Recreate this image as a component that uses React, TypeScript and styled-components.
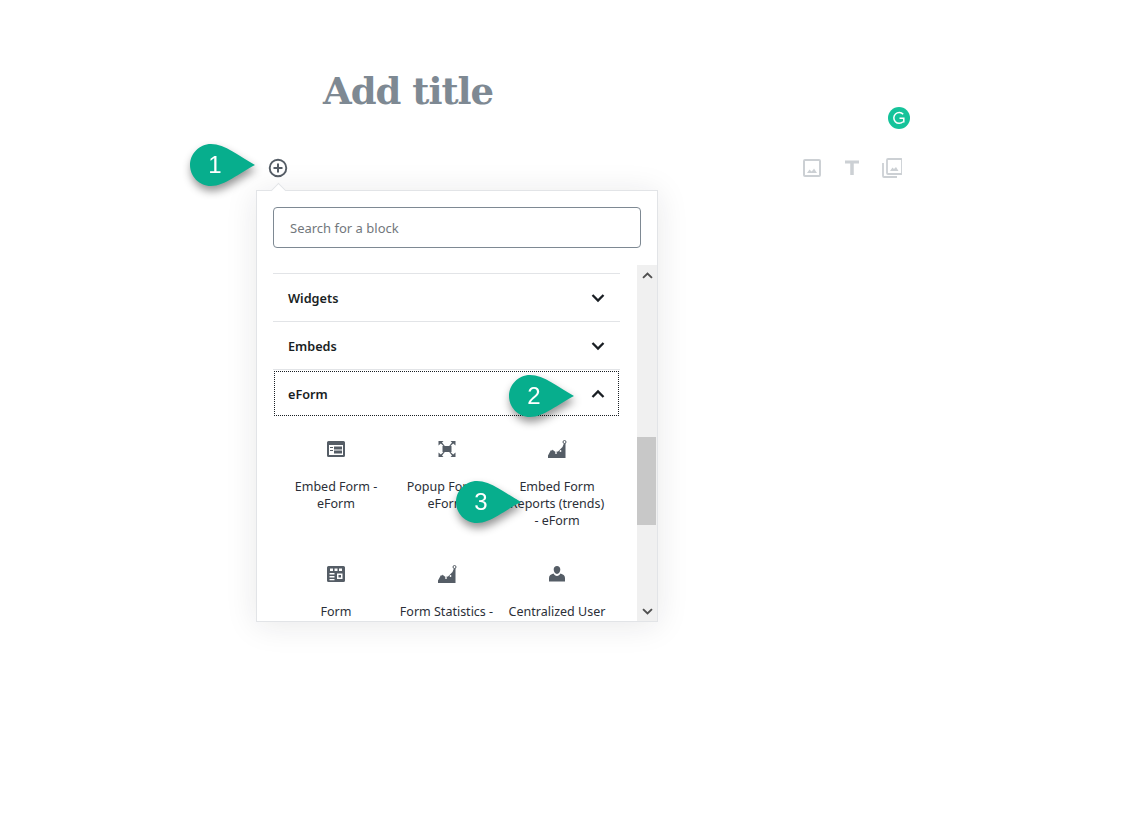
import styled, { createGlobalStyle } from "styled-components";

const GlobalStyle = createGlobalStyle`
  html, body {
    margin: 0;
    padding: 0;
    background: #fff;
    overflow: hidden;
  }
  body {
    font-family: "Noto Sans", "Open Sans", sans-serif;
    color: #191e23;
  }
`;

type Block = { title: string; icon: keyof typeof blockIcons };

const blockIcons = {
  embed: (
    <path
      fillRule="evenodd"
      d="M1 3.500A1.500 1.500 0 0 1 2.500 2h15A1.500 1.500 0 0 1 19 3.500v13a1.500 1.500 0 0 1-1.500 1.500h-15A1.500 1.500 0 0 1 1 16.500zM3 6v10h14V6zm5 1.500h8v3H8zm0 4h8v3H8zM4 8h3v1H4zm0 3h3v1H4z"
    />
  ),
  popup: (
    <>
      <path d="M1.500 2h5L5 3.500l2.800 3.500H6.500L3.800 4.500 1.500 6.500zM18.500 2h-5L15 3.500 12.200 7h1.300l2.700-2.500 2.300 2zM1.500 18h5L5 16.500 7.800 13H6.500l-2.700 2.500-2.300-2zM18.500 18h-5l1.500-1.500-2.800-3.500h1.300l2.700 2.500 2.300-2z" />
      <path d="M5.500 7h9v6h-9z" />
    </>
  ),
  chart: (
    <>
      <path d="M1 19v-2.500l3.500-6.500 4 3 2.500-.5 2.500-2.500 2-2L17.500 3l1 .5V19z" />
      <circle cx="4.500" cy="10.500" r="1.100" fill="#fff" />
      <circle cx="9" cy="14" r="0.900" fill="#fff" />
      <circle cx="13.500" cy="12" r="0.900" fill="#fff" />
      <circle cx="17.500" cy="3" r="1.500" fill="#fff" stroke="#555d66" strokeWidth="1" />
    </>
  ),
  form: (
    <path
      fillRule="evenodd"
      d="M2.500 2h15A1.500 1.500 0 0 1 19 3.500v13a1.500 1.500 0 0 1-1.500 1.500h-15A1.500 1.500 0 0 1 1 16.500v-13A1.500 1.500 0 0 1 2.500 2zM4 4.500V7h3V4.500zm4.500 0V7h3V4.500zm4.500 0V7h3V4.500zM3.500 9v1.500h5V9zm0 3v1.500h5V12zm0 3v1.200h5V15zM11 9.500V15h5.500V9.500zm1.500 1.500H15v2.500h-2.500z"
    />
  ),
  user: (
    <path d="M10 2c2 0 3.300 1.500 3.300 3.500S12 10 10 10 6.700 7.500 6.700 5.500 8 2 10 2zM6.500 9.500C7.300 11 8.600 12 10 12s2.700-1 3.500-2.500C16 10.300 18 11.500 18 14v3.500H2V14c0-2.500 2-3.700 4.500-4.500z" />
  ),
};

const blocks: Block[] = [
  { title: "Embed Form - eForm", icon: "embed" },
  { title: "Popup Form - eForm", icon: "popup" },
  { title: "Embed Form Reports (trends) - eForm", icon: "chart" },
  { title: "Form", icon: "form" },
  { title: "Form Statistics - eForm", icon: "chart" },
  { title: "Centralized User", icon: "user" },
];

function Chevron({ up, size = 16 }: { up?: boolean; size?: number }) {
  return (
    <svg width={size} height={size} viewBox="0 0 16 16" fill="none" stroke="currentColor" strokeWidth="2.300">
      <path d={up ? "M2.500 11l5.500-5.500 5.500 5.500" : "M2.500 5l5.500 5.500 5.500-5.500"} />
    </svg>
  );
}

function Callout({ n, className }: { n: number; className?: string }) {
  return (
    <CalloutBox className={className}>
      <svg width="66" height="44" viewBox="0 0 66 44">
        <path d="M21 1C35 1 49 13 65 22 49 30 35 43 21 43 9 43 0 33 0 22S9 1 21 1z" fill="#07ae8d" />
      </svg>
      <CalloutNumber>{n}</CalloutNumber>
    </CalloutBox>
  );
}

export default function App() {
  return (
    <Page>
      <GlobalStyle />
      <Title>Add title</Title>
      <Grammarly>
        <svg width="22" height="22" viewBox="0 0 22 22" fill="none" stroke="#fff">
          <circle cx="11" cy="11" r="11" fill="#15c39a" stroke="none" />
          <path d="M15.200 7.300A5.400 5.400 0 1 0 15 14.800" strokeWidth="1.500" />
          <path d="M11.500 11.200h4.300v4.300" strokeWidth="1.500" />
        </svg>
      </Grammarly>

      <Toolbar>
        <PlusButton>
          <svg width="20" height="20" viewBox="0 0 20 20" fill="none" stroke="#555d66">
            <circle cx="10" cy="10" r="8.300" strokeWidth="1.900" />
            <path d="M10 5.500v9M5.500 10h9" strokeWidth="2" />
          </svg>
        </PlusButton>
        <QuickIcons>
          <svg width="20" height="20" viewBox="0 0 20 20" fill="none" stroke="#ccd0d4" strokeWidth="2">
            <rect x="2" y="2" width="16" height="16" rx="1" />
            <path d="M5 15l2.500-3.500 2 2 1.500-1.500 1-1.500 3 4.500z" fill="#ccd0d4" stroke="none" />
          </svg>
          <svg width="20" height="20" viewBox="0 0 20 20" fill="#ccd0d4">
            <path d="M3 2.500h14v3h-5.250V17h-3.500V5.500H3z" />
          </svg>
          <svg width="20" height="20" viewBox="0 0 20 20" fill="none" stroke="#ccd0d4" strokeWidth="1.800">
            <rect x="5" y="1" width="15" height="15" rx="1" />
            <path d="M1 5v13a1 1 0 0 0 1 1h13" />
            <path d="M8 13l2.500-3.500 1.500 1.500 1-1 1-1 2.500 4z" fill="#ccd0d4" stroke="none" />
          </svg>
        </QuickIcons>
      </Toolbar>

      <Panel>
        <PanelArrow />
        <SearchWrap>
          <SearchInput placeholder="Search for a block" readOnly />
        </SearchWrap>
        <ListArea>
          <List>
            <SectionRow>
              <span>Widgets</span>
              <Chevron />
            </SectionRow>
            <SectionRow>
              <span>Embeds</span>
              <Chevron />
            </SectionRow>
            <ActiveSection>
              <ActiveRow>
                <span>eForm</span>
                <Chevron up />
              </ActiveRow>
            </ActiveSection>
            <BlockGrid>
              {blocks.map((b) => (
                <BlockItem key={b.title}>
                  <svg width="20" height="20" viewBox="0 0 20 20" fill="#555d66">
                    {blockIcons[b.icon]}
                  </svg>
                  <BlockLabel>{b.title}</BlockLabel>
                </BlockItem>
              ))}
            </BlockGrid>
          </List>
          <Scrollbar>
            <ScrollArrow>
              <Chevron up size={13} />
            </ScrollArrow>
            <ScrollThumb />
            <ScrollArrow>
              <Chevron size={13} />
            </ScrollArrow>
          </Scrollbar>
        </ListArea>
      </Panel>

      <CalloutOne n={1} />
      <CalloutTwo n={2} />
      <CalloutThree n={3} />
    </Page>
  );
}

const Page = styled.div`
  position: relative;
  width: 1124px;
  height: 816px;
  overflow: hidden;
  padding-top: 62px;
  box-sizing: border-box;
`;

const Title = styled.h1`
  margin: 0 0 0 323px;
  font-family: "DejaVu Serif", "Liberation Serif", serif;
  font-size: 37px;
  line-height: 58px;
  font-weight: 700;
  letter-spacing: -1px;
  color: #7e8993;
`;

const Grammarly = styled.div`
  position: absolute;
  left: 888px;
  top: 107px;
  width: 22px;
  height: 22px;
`;

const Toolbar = styled.div`
  display: flex;
  justify-content: space-between;
  align-items: center;
  width: 636px;
  height: 20px;
  margin: 38px 0 0 268px;
`;

const PlusButton = styled.div`
  display: flex;
  width: 20px;
  height: 20px;
`;

const QuickIcons = styled.div`
  display: flex;
  gap: 20px;
  margin-right: 2px;
`;

const Panel = styled.div`
  position: relative;
  width: 402px;
  height: 432px;
  margin: 12px 0 0 256px;
  box-sizing: border-box;
  border: 1px solid #e2e4e7;
  background: #fff;
  box-shadow: 0 3px 30px rgba(25, 30, 35, 0.1);
`;

const PanelArrow = styled.div`
  position: absolute;
  left: 16px;
  top: -6px;
  width: 10px;
  height: 10px;
  background: #fff;
  border-top: 1px solid #e2e4e7;
  border-left: 1px solid #e2e4e7;
  transform: rotate(45deg);
`;

const SearchWrap = styled.div`
  padding: 16px 16px 17px;
`;

const SearchInput = styled.input`
  display: block;
  width: 100%;
  height: 41px;
  box-sizing: border-box;
  padding: 0 16px;
  border: 1px solid #7e8993;
  border-radius: 4px;
  outline: none;
  font-family: inherit;
  font-size: 13px;
  color: #32373c;

  &::placeholder {
    color: #72777c;
    opacity: 1;
  }
`;

const ListArea = styled.div`
  display: flex;
  height: 356px;
  overflow: hidden;
`;

const List = styled.div`
  flex: 1;
  min-width: 0;
  padding: 8px 17px 0 16px;
`;

const SectionRow = styled.div`
  display: flex;
  justify-content: space-between;
  align-items: center;
  height: 47px;
  padding: 0 14px 0 15px;
  border-top: 1px solid #e2e4e7;
  font-size: 12.700px;
  font-weight: 600;
  color: #191e23;
`;

const ActiveSection = styled.div`
  padding: 1px 1px 0;
  border-top: 1px solid #e2e4e7;
`;

const ActiveRow = styled(SectionRow)`
  height: 43px;
  padding: 0 12px 0 13px;
  border: 1px dotted #191e23;
`;

const BlockGrid = styled.div`
  display: grid;
  grid-template-columns: repeat(3, 110px);
  column-gap: 0.5px;
  margin-left: 8px;
  padding-top: 23px;
  row-gap: 26px;
`;

const BlockItem = styled.div`
  display: flex;
  flex-direction: column;
  align-items: center;
  height: 99px;
`;

const BlockLabel = styled.div`
  width: 97px;
  margin-top: 19px;
  font-size: 12.500px;
  line-height: 17px;
  text-align: center;
  color: #2b2f38;
`;

const Scrollbar = styled.div`
  display: flex;
  flex-direction: column;
  flex: none;
  width: 20px;
  background: #f0f0f0;
`;

const ScrollArrow = styled.div`
  display: flex;
  align-items: center;
  justify-content: center;
  flex: none;
  height: 20px;
  color: #505050;
`;

const ScrollThumb = styled.div`
  height: 88px;
  margin: 152px 1px auto 0;
  background: #c8c8c8;
`;

const CalloutBox = styled.div`
  position: absolute;
  width: 66px;
  height: 44px;
  filter: drop-shadow(1px 5px 4px rgba(0, 0, 0, 0.42));

  svg {
    display: block;
  }
`;

const CalloutNumber = styled.span`
  position: absolute;
  left: 0;
  top: 0;
  width: 50px;
  line-height: 44px;
  text-align: center;
  font-family: "Liberation Sans", Arial, sans-serif;
  font-size: 24px;
  color: #fff;
`;

const CalloutOne = styled(Callout)`
  left: 190px;
  top: 143px;
`;

const CalloutTwo = styled(Callout)`
  left: 509px;
  top: 374px;
`;

const CalloutThree = styled(Callout)`
  left: 456px;
  top: 480px;
`;
